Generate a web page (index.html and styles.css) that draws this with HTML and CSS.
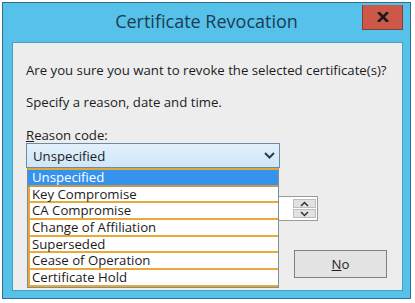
FILE: index.html
```html
<!DOCTYPE html>
<html lang="en">
<head>
    <meta charset="UTF-8">
    <title>Certificate Revocation</title>
    <link rel="stylesheet" href="styles.css">
</head>
<body>
    <div class="dialog">
        <div class="titlebar">
            <span class="title">Certificate Revocation</span>
            <button class="close" aria-label="Close">
                <svg width="12" height="10" viewBox="0 0 12 10"><path d="M2 1 L10 9 M10 1 L2 9" stroke="#1a1a1a" stroke-width="2.6" stroke-linecap="square"/></svg>
            </button>
        </div>
        <div class="content">
            <p class="msg">Are you sure you want to revoke the selected certificate(s)?</p>
            <p class="msg second">Specify a reason, date and time.</p>
            <label class="label"><u>R</u>eason code:</label>
            <div class="combo">
                <div class="select">
                    <span>Unspecified</span>
                    <svg width="11" height="7" viewBox="0 0 11 7"><path d="M1 1 L5.5 5.5 L10 1" fill="none" stroke="#2d3e4e" stroke-width="2"/></svg>
                </div>
                <ul class="list">
                    <li class="selected">Unspecified</li>
                    <li>Key Compromise</li>
                    <li>CA Compromise</li>
                    <li>Change of Affiliation</li>
                    <li>Superseded</li>
                    <li>Cease of Operation</li>
                    <li>Certificate Hold</li>
                </ul>
            </div>
            <div class="picker">
                <div class="spin">
                    <span class="spin-btn"><svg width="9" height="6" viewBox="0 0 9 6"><path d="M1 5 L4.5 1.5 L8 5" fill="none" stroke="#333" stroke-width="1.5"/></svg></span>
                    <span class="spin-btn"><svg width="9" height="6" viewBox="0 0 9 6"><path d="M1 1 L4.5 4.5 L8 1" fill="none" stroke="#333" stroke-width="1.5"/></svg></span>
                </div>
            </div>
            <div class="actions">
                <button class="btn"><u>N</u>o</button>
            </div>
        </div>
    </div>
</body>
</html>
```

FILE: styles.css
```css
body {
    margin: 0;
    background: #ffffff;
    font-family: "Open Sans", "Liberation Sans", sans-serif;
    color: #1c1c1c;
}

.dialog {
    margin: 2px 0 0 2px;
    width: 407px;
    height: 295px;
    background-color: #56c2ea;
    border: 1px solid #2f6f8c;
    display: flex;
    flex-direction: column;
}

.titlebar {
    height: 39px;
    background-color: #56c2ea;
    display: flex;
    align-items: center;
    justify-content: center;
    position: relative;
}

.title {
    font-size: 18px;
    color: #1d3b52;
    margin-top: -3px;
}

.close {
    position: absolute;
    top: 2px;
    right: 7px;
    width: 41px;
    height: 25px;
    background: #cb5849;
    border: 1px solid #8e3a30;
    border-top: none;
    display: flex;
    align-items: center;
    justify-content: center;
    padding: 0;
}

.content {
    flex: 1;
    margin: 0 7px 7px 9px;
    background: #ededed;
    border: 1px solid #4c9ec0;
    padding: 0 0 0 13px;
    position: relative;
}

.msg {
    font-size: 13.2px;
    margin: 18px 0 0 0;
    line-height: 18px;
}

.msg.second {
    margin-top: 14px;
}

.label {
    display: block;
    font-size: 13.2px;
    margin-top: 16px;
    line-height: 16px;
}

.combo {
    position: relative;
    width: 254px;
    z-index: 1;
}

.select {
    height: 23px;
    border: 1px solid #6c8aa4;
    background: linear-gradient(#e2f0fb, #cfe6f7);
    display: flex;
    align-items: center;
    justify-content: space-between;
    padding: 0 4px 0 6px;
    font-size: 13.2px;
}

.list {
    position: absolute;
    top: 25px;
    left: 1px;
    width: 252px;
    margin: 0;
    padding: 0;
    list-style: none;
    background: #ffffff;
    border: 1px solid #7f8c96;
    border-top: 2px solid #e4a636;
    box-sizing: border-box;
}

.list li {
    height: 16.7px;
    box-sizing: border-box;
    line-height: 15px;
    font-size: 13.2px;
    padding-left: 2px;
    border-left: 2px solid #e9a93a;
    border-bottom: 2px solid #e9a93a;
}

.list li.selected {
    background: #3593ee;
    color: #ffffff;
    border-left-color: #3593ee;
    border-bottom-color: #c69a4a;
}

.picker {
    margin: 28px 0 0 153px;
    width: 139px;
    height: 25px;
    border: 1px solid #9a9a9a;
    background: #ffffff;
    display: flex;
    justify-content: flex-end;
    box-sizing: border-box;
}

.spin {
    display: flex;
    flex-direction: column;
    justify-content: center;
    padding: 2px 1px 2px 0;
    gap: 1px;
}

.spin-btn {
    width: 21px;
    height: 9px;
    background: #e2e2e2;
    border: 1px solid #bdbdbd;
    display: flex;
    align-items: center;
    justify-content: center;
}

.actions {
    display: flex;
    margin: 29px 0 0 268px;
}

.btn {
    width: 93px;
    height: 28px;
    background: #e3e3e3;
    border: 1px solid #808080;
    font-family: "Open Sans", "Liberation Sans", sans-serif;
    font-size: 13.2px;
    color: #1c1c1c;
}
```
